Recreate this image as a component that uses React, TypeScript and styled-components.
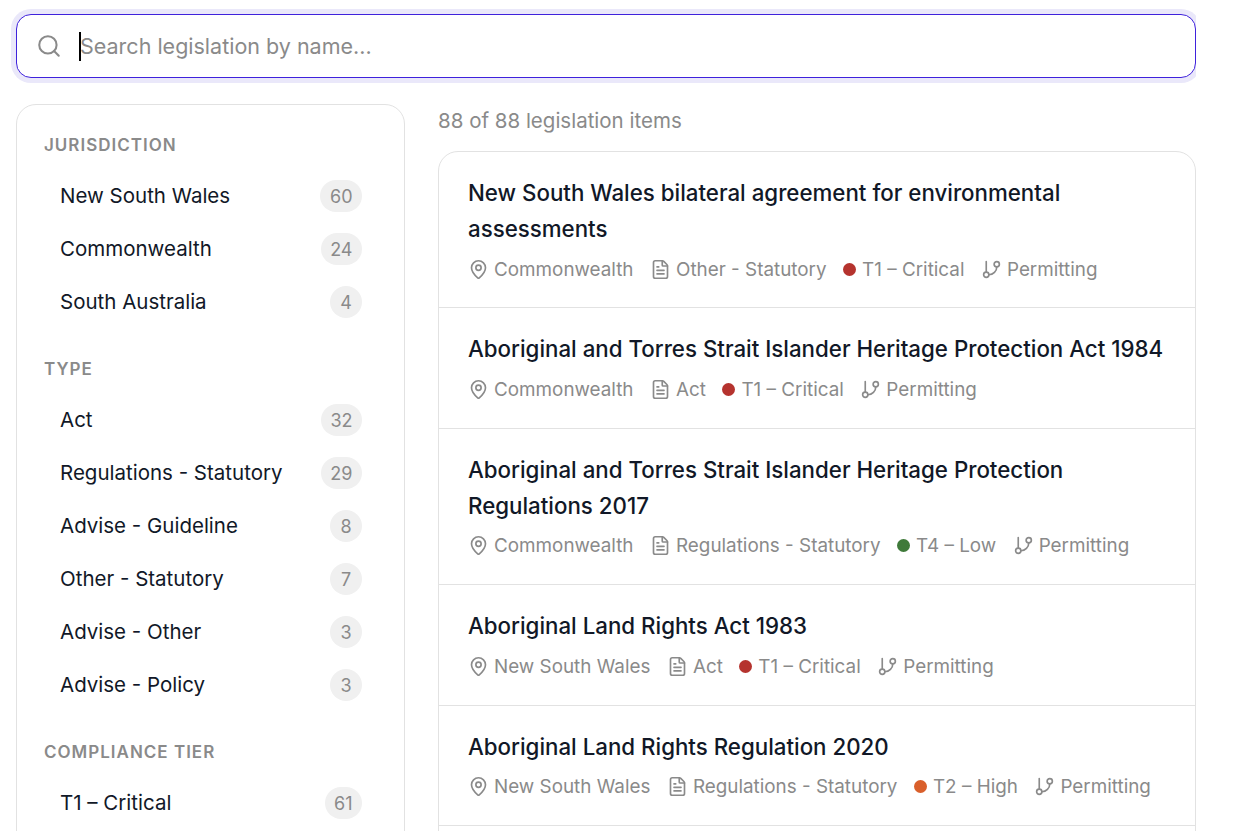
import React from "react";
import styled, { createGlobalStyle } from "styled-components";
import { Search, MapPin, FileText, GitBranch } from "lucide-react";

const GlobalStyle = createGlobalStyle`
  html, body {
    margin: 0;
    height: 831px;
    overflow: hidden;
    background: #fff;
  }
  body {
    font-family: Inter, "Liberation Sans", sans-serif;
    color: #111827;
  }
`;

const Page = styled.div`
  box-sizing: border-box;
  width: 1196px;
  height: 831px;
  overflow: hidden;
  padding: 14px 0 0 16px;
`;

const SearchBar = styled.label`
  position: relative;
  box-sizing: border-box;
  display: flex;
  align-items: center;
  gap: 18px;
  height: 64px;
  padding: 0 19px;
  background: #fff;
  border: 1px solid #3f22dc;
  border-radius: 15px;
  box-shadow: 0 0 0 5px #eae8fa;
  color: #8a8a8a;
`;

const SearchInput = styled.input`
  flex: 1;
  border: 0;
  outline: 0;
  padding: 0;
  font: 400 21.5px Inter, "Liberation Sans", sans-serif;
  caret-color: transparent;
  background: transparent;
  &::placeholder {
    color: #8a8a8a;
    opacity: 1;
  }
`;

const Caret = styled.span`
  position: absolute;
  left: 62px;
  top: 17px;
  width: 2px;
  height: 29px;
  background: #000;
`;

const Columns = styled.div`
  display: grid;
  grid-template-columns: 389px 758px;
  gap: 33px;
  margin-top: 26px;
`;

const Sidebar = styled.aside`
  box-sizing: border-box;
  height: 900px;
  padding: 27px 42px 0 27px;
  border: 1px solid #e2e2e2;
  border-radius: 20px;
`;

const FilterGroup = styled.section`
  margin-bottom: 27.5px;
`;

const FilterHeading = styled.h3`
  margin: 0 0 10.5px;
  font-size: 17px;
  line-height: 27px;
  font-weight: 600;
  letter-spacing: 1px;
  color: #8a8a8a;
  text-transform: uppercase;
`;

const FilterRow = styled.div`
  display: flex;
  align-items: center;
  justify-content: space-between;
  height: 53px;
  padding-left: 16px;
  font-size: 20.5px;
`;

const FilterLabel = styled.span`
  margin-bottom: 2px;
`;

const CountBadge = styled.span`
  box-sizing: border-box;
  min-width: 32px;
  height: 32px;
  padding: 0 9.5px;
  display: flex;
  align-items: center;
  justify-content: center;
  border-radius: 16px;
  background: #f0f0f0;
  color: #8a8a8a;
  font-size: 18px;
`;

const Results = styled.main`
  min-width: 0;
`;

const ResultCount = styled.div`
  font-size: 20.5px;
  line-height: 34px;
  color: #8a8a8a;
  margin-bottom: 13px;
`;

const ResultList = styled.div`
  min-height: 800px;
  border: 1px solid #e2e2e2;
  border-radius: 20px;
`;

const ResultRow = styled.article`
  padding: 23px 29px 23.4px;
  border-bottom: 1px solid #e2e2e2;
`;

const ResultTitle = styled.h2`
  margin: 0 0 7px;
  font-size: 22.3px;
  line-height: 36px;
  font-weight: 500;
  color: #111827;
`;

const Meta = styled.div`
  display: flex;
  align-items: center;
  gap: 16.5px;
  height: 30px;
  font-size: 18.85px;
  color: #8a8a8a;
`;

const MetaItem = styled.span`
  display: inline-flex;
  align-items: center;
  gap: 5px;
  white-space: nowrap;
`;

const TierItem = styled(MetaItem)`
  gap: 6px;
`;

const TierDot = styled.span<{ $color: string }>`
  width: 13px;
  height: 13px;
  border-radius: 50%;
  background: ${(p) => p.$color};
`;

const tierColors: Record<string, string> = {
  "T1 – Critical": "#b5332e",
  "T2 – High": "#d95f2b",
  "T4 – Low": "#3f7a3a",
};

const filters = [
  {
    heading: "Jurisdiction",
    items: [
      ["New South Wales", 60],
      ["Commonwealth", 24],
      ["South Australia", 4],
    ],
  },
  {
    heading: "Type",
    items: [
      ["Act", 32],
      ["Regulations - Statutory", 29],
      ["Advise - Guideline", 8],
      ["Other - Statutory", 7],
      ["Advise - Other", 3],
      ["Advise - Policy", 3],
    ],
  },
  {
    heading: "Compliance tier",
    items: [["T1 – Critical", 61]],
  },
];

const results = [
  {
    title: "New South Wales bilateral agreement for environmental assessments",
    place: "Commonwealth",
    type: "Other - Statutory",
    tier: "T1 – Critical",
  },
  {
    title: "Aboriginal and Torres Strait Islander Heritage Protection Act 1984",
    place: "Commonwealth",
    type: "Act",
    tier: "T1 – Critical",
  },
  {
    title: "Aboriginal and Torres Strait Islander Heritage Protection Regulations 2017",
    place: "Commonwealth",
    type: "Regulations - Statutory",
    tier: "T4 – Low",
  },
  {
    title: "Aboriginal Land Rights Act 1983",
    place: "New South Wales",
    type: "Act",
    tier: "T1 – Critical",
  },
  {
    title: "Aboriginal Land Rights Regulation 2020",
    place: "New South Wales",
    type: "Regulations - Statutory",
    tier: "T2 – High",
  },
];

export default function App() {
  return (
    <Page>
      <GlobalStyle />
      <SearchBar>
        <Search size={26} strokeWidth={1.9} />
        <SearchInput placeholder="Search legislation by name..." />
        <Caret />
      </SearchBar>
      <Columns>
        <Sidebar>
          {filters.map((group) => (
            <FilterGroup key={group.heading}>
              <FilterHeading>{group.heading}</FilterHeading>
              {group.items.map(([label, count]) => (
                <FilterRow key={label}>
                  <FilterLabel>{label}</FilterLabel>
                  <CountBadge>{count}</CountBadge>
                </FilterRow>
              ))}
            </FilterGroup>
          ))}
        </Sidebar>
        <Results>
          <ResultCount>88 of 88 legislation items</ResultCount>
          <ResultList>
            {results.map((item) => (
              <ResultRow key={item.title}>
                <ResultTitle>{item.title}</ResultTitle>
                <Meta>
                  <MetaItem>
                    <MapPin size={21} strokeWidth={1.9} />
                    {item.place}
                  </MetaItem>
                  <MetaItem>
                    <FileText size={21} strokeWidth={1.9} />
                    {item.type}
                  </MetaItem>
                  <TierItem>
                    <TierDot $color={tierColors[item.tier]} />
                    {item.tier}
                  </TierItem>
                  <MetaItem>
                    <GitBranch size={21} strokeWidth={1.9} />
                    Permitting
                  </MetaItem>
                </Meta>
              </ResultRow>
            ))}
          </ResultList>
        </Results>
      </Columns>
    </Page>
  );
}
